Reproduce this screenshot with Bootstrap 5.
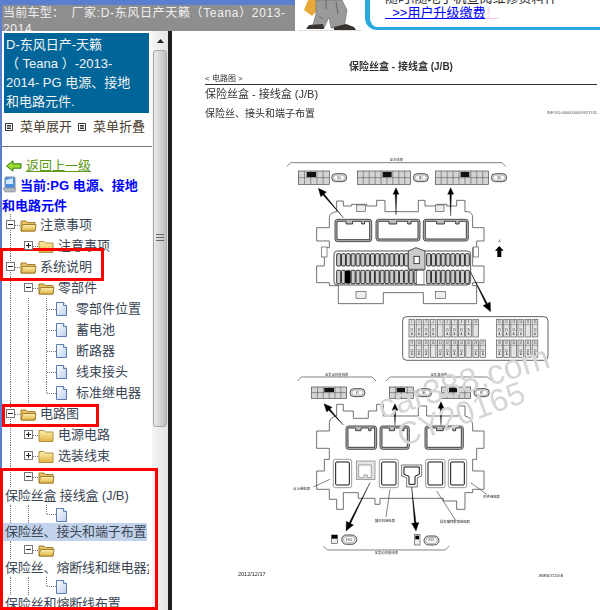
<!DOCTYPE html>
<html lang="zh-CN">
<head>
    <meta charset="UTF-8">
    <meta name="viewport" content="width=device-width, initial-scale=1.0">
    <title>保险丝盒 - 接线盒 (J/B)</title>
    <link href="https://cdn.jsdelivr.net/npm/bootstrap@5.3.0/dist/css/bootstrap.min.css" rel="stylesheet">
    <style>
        html, body { height: 100%; }
        body { font-family: "Liberation Sans", "Noto Sans CJK SC", sans-serif; font-size: 13px; background: #fff; overflow: hidden; }
        .page { width: 600px; height: 610px; position: relative; overflow: hidden; }
        .top { height: 31px; }
        .car-bar { width: 295px; height: 31px; background: #8e8e8e; color: #eee; border-top: 5px solid #5b7fd0; border-left: 2px solid #5b7fd0; padding-left: 1px; font-size: 12px; line-height: 16px; letter-spacing: .25px; }
        .car-bar span { letter-spacing: .65px; }
        .man { width: 64px; margin-left: 3px; }
        .bubble { width: 235px; height: 30px; margin-left: 3px; border: solid #29a9dd; border-width: 0 0 3px 5px; border-bottom-left-radius: 12px; padding-left: 15px; line-height: 15px; }
        .bubble .cut { margin-top: -10px; color: #222; }
        .bubble a { color: #00f; }
        .bubble i { color: #f9c9f0; font-style: normal; text-decoration: underline; }
        .main { height: 579px; }
        .side { width: 152px; border-left: 2px solid #5b7fd0; }
        .title-box { background: #069; color: #f4f4f4; margin: 2px 2px 0 2px; height: 80px; width: 145px; padding: 2px 2px 0 2px; line-height: 19px; white-space: nowrap; }
        .menu-row { height: 28px; padding-left: 3px; color: #4a4030; white-space: nowrap; }
        .menu-row svg { margin-right: 7px; flex: none; }
        .menu-row span { margin-right: 6px; }
        .side hr { margin: 5px 0 9px; border-top: 1px solid #777; opacity: 1; }
        .back { height: 20px; padding-left: 4px; }
        .back a { color: #5c9a18; margin-left: 4px; }
        .current { color: #00f; font-weight: 700; line-height: 20px; white-space: nowrap; }
        .current svg { margin-right: 3px; vertical-align: -3px; }
        .tree { color: #3a4654; white-space: nowrap; overflow: hidden; width: 147px; margin-top: -2px; line-height: 18px; }
        .row-t { height: 21px; }
        .row-s { height: 18px; }
        .g, .x, .c { width: 18px; height: 100%; flex: none; position: relative; }
        .g::before, .x::before { content: ""; position: absolute; left: 8px; top: 0; bottom: 0; border-left: 1px dotted #777; }
        .x.end::before { display: none; }
        .x::after, .c::after { content: ""; position: absolute; left: 9px; right: 0; top: 50%; border-top: 1px dotted #777; }
        .c::before { content: ""; position: absolute; left: 8px; top: 0; height: 50%; border-left: 1px dotted #777; }
        .box { position: absolute; left: 4px; top: 50%; margin-top: -5px; width: 9px; height: 9px; background: #fff; border: 1px solid #777; z-index: 1; }
        .box::before { content: ""; position: absolute; left: 1px; right: 1px; top: 3px; border-top: 1px solid #222; }
        .box.plus::after { content: ""; position: absolute; top: 1px; bottom: 1px; left: 3px; border-left: 1px solid #222; }
        .folder { width: 20px; flex: none; }
        .doc { width: 20px; flex: none; }
        .textline { padding-left: 3px; position: relative; letter-spacing: -.15px; }
        .textline::before { content: ""; position: absolute; left: 8px; top: 0; bottom: 0; border-left: 1px dotted #777; z-index: 0; }
        .textline span { position: relative; background: #fff; }
        .textline.sel { background: #c2d2ea; width: 145px; }
        .textline.sel::before { display: none; }
        .textline.sel span { background: transparent; }
        .scroll { width: 16px; background: linear-gradient(90deg, #f4f4f4, #e4e4e4); position: relative; }
        .scroll .up { height: 19px; }
        .thumb { height: 377px; margin: 0 1px; border: 1px solid #a8a8a8; border-radius: 3px; background: linear-gradient(90deg, #e9e9e9, #d4d4d4 55%, #bdbdbd); }
        .grip { width: 8px; height: 7px; border-top: 1px solid #666; border-bottom: 1px solid #666; position: relative; margin-top: 183px; }
        .grip::after { content: ""; position: absolute; left: 0; right: 0; top: 2px; border-top: 1px solid #666; }
        .divider { width: 4px; background: #1e1e1e; }
        .content { width: 428px; }
        .heads { padding: 29px 3px 0 33px; color: #333; filter: blur(.25px); }
        .heads h1 { font-size: 10px; font-weight: 700; line-height: 14px; margin: 0; text-align: center; }
        .crumb { font-size: 8px; line-height: 10px; border-bottom: 1px solid #333; height: 11px; }
        .heads h2 { font-size: 11px; font-weight: 400; line-height: 18px; margin: 0; }
        .sub { height: 20px; font-size: 10px; }
        .sub small { font-size: 4px; color: #555; }
        .diagram { display: block; filter: blur(.4px); }
        .redbox { position: absolute; border: 3px solid #f00; pointer-events: none; }
        .redbox-1 { left: 0; top: 248px; width: 104px; height: 33px; }
        .redbox-2 { left: 2px; top: 404px; width: 97px; height: 23px; }
        .redbox-3 { left: 0; top: 468px; width: 158px; height: 142px; }
    </style>
</head>
<body>
<div class="page">
    <div class="top d-flex">
        <div class="car-bar overflow-hidden">当前车型：&nbsp;&nbsp;<span>厂家:D-东风日产天籁（Teana）2013-2014</span></div>
        <svg class="man" viewBox="0 0 64 31" height="31">
            <path d="M10 0h14l-2 8-8 8-8-6z" fill="#e8a83a"/>
            <path d="M18 0h26l5 10-3 18H33l-2-11-5 11H14l4-14z" fill="#9a9a9a" stroke="#666" stroke-width=".6"/>
            <path d="M28 0v9M38 2l2 12M21 16l4 3" stroke="#666" fill="none"/>
            <path d="M8 29l3-4 14-1 1 5zM36 27l12-3 8 3 2 3H36z" fill="#3a3430"/>
            <path d="M0 31h64" stroke="#bbb"/>
        </svg>
        <div class="bubble">
            <div class="cut text-nowrap">随时,随地手机查阅维修资料件</div>
            <div class="text-nowrap"><a href="#">&nbsp;&nbsp;>>用户升级缴费</a><i>！</i></div>
        </div>
    </div>

    <div class="main d-flex">
        <div class="side flex-none overflow-hidden">
            <div class="title-box">D-东风日产-天籁<br>（ Teana ）-2013-<br>2014- PG 电源、接地<br>和电路元件.</div>
            <div class="menu-row d-flex align-items-center">
                <svg width="8" height="8" viewBox="0 0 8 8"><path d="M.5.5h7v7h-7zM2 2.500h4M2 4h4M2 5.500h4" fill="#fff" stroke="#333"/></svg>
                <span>菜单展开</span>
                <svg width="8" height="8" viewBox="0 0 8 8"><path d="M.5.5h7v7h-7zM2 2.500h4M2 4h4M2 5.500h4" fill="#fff" stroke="#333"/></svg>
                <span>菜单折叠</span>
            </div>
            <hr>
            <div class="back d-flex align-items-center">
                <svg width="16" height="12" viewBox="0 0 16 12"><path d="M.5 6L7 .8v3h8v4.400H7v3z" fill="#9bdc2e" stroke="#2f7a10"/></svg>
                <a href="#">返回上一级</a>
            </div>
            <div class="current">
                <svg width="15" height="17" viewBox="0 0 15 17"><rect x="3" y="1" width="10" height="11" rx="1" fill="#4a90e0" stroke="#7a8ea8"/><path d="M4 4l7-2v6H4z" fill="#cfe6fb"/><path d="M1 12h13l-1 4H3z" fill="#b4bac4" stroke="#7a8090" stroke-width=".6"/></svg>当前:PG 电源、接地<br>和电路元件
            </div>
            <div class="tree">
                <div class="row-t d-flex align-items-center"><span class="x"><span class="box"></span></span><svg class="folder" height="14" viewBox="0 0 20 14"><use href="#fo"/></svg>注意事项</div>
                <div class="row-t d-flex align-items-center"><span class="g"></span><span class="x end"><span class="box plus"></span></span><svg class="folder" height="14" viewBox="0 0 20 14"><use href="#fc"/></svg>注意事项</div>
                <div class="row-t d-flex align-items-center"><span class="x"><span class="box"></span></span><svg class="folder" height="14" viewBox="0 0 20 14"><use href="#fo"/></svg>系统说明</div>
                <div class="row-t d-flex align-items-center"><span class="g"></span><span class="x end"><span class="box"></span></span><svg class="folder" height="14" viewBox="0 0 20 14"><use href="#fo"/></svg>零部件</div>
                <div class="row-t d-flex align-items-center"><span class="g"></span><span class="g"></span><span class="x"></span><svg class="doc" height="15" viewBox="0 0 20 15"><use href="#dc"/></svg>零部件位置</div>
                <div class="row-t d-flex align-items-center"><span class="g"></span><span class="g"></span><span class="x"></span><svg class="doc" height="15" viewBox="0 0 20 15"><use href="#dc"/></svg>蓄电池</div>
                <div class="row-t d-flex align-items-center"><span class="g"></span><span class="g"></span><span class="x"></span><svg class="doc" height="15" viewBox="0 0 20 15"><use href="#dc"/></svg>断路器</div>
                <div class="row-t d-flex align-items-center"><span class="g"></span><span class="g"></span><span class="x"></span><svg class="doc" height="15" viewBox="0 0 20 15"><use href="#dc"/></svg>线束接头</div>
                <div class="row-t d-flex align-items-center"><span class="g"></span><span class="g"></span><span class="c"></span><svg class="doc" height="15" viewBox="0 0 20 15"><use href="#dc"/></svg>标准继电器</div>
                <div class="row-t d-flex align-items-center"><span class="x"><span class="box"></span></span><svg class="folder" height="14" viewBox="0 0 20 14"><use href="#fo"/></svg>电路图</div>
                <div class="row-t d-flex align-items-center"><span class="g"></span><span class="x end"><span class="box plus"></span></span><svg class="folder" height="14" viewBox="0 0 20 14"><use href="#fc"/></svg>电源电路</div>
                <div class="row-t d-flex align-items-center"><span class="g"></span><span class="x end"><span class="box plus"></span></span><svg class="folder" height="14" viewBox="0 0 20 14"><use href="#fc"/></svg>选装线束</div>
                <div class="row-t d-flex align-items-center"><span class="g"></span><span class="x end"><span class="box"></span></span><svg class="folder" height="14" viewBox="0 0 20 14"><use href="#fo"/></svg></div>
                <div class="row-s d-flex align-items-center textline"><span>保险丝盒 接线盒 (J/B)</span></div>
                <div class="row-s d-flex align-items-center"><span class="g"></span><span class="g"></span><span class="c"></span><svg class="doc" height="15" viewBox="0 0 20 15"><use href="#dc"/></svg></div>
                <div class="row-s d-flex align-items-center textline sel"><span>保险丝、接头和端子布置</span></div>
                <div class="row-s d-flex align-items-center"><span class="g"></span><span class="x end"><span class="box"></span></span><svg class="folder" height="14" viewBox="0 0 20 14"><use href="#fo"/></svg></div>
                <div class="row-s d-flex align-items-center textline"><span>保险丝、熔断线和继电器盒</span></div>
                <div class="row-s d-flex align-items-center"><span class="g"></span><span class="g"></span><span class="c"></span><svg class="doc" height="15" viewBox="0 0 20 15"><use href="#dc"/></svg></div>
                <div class="row-s d-flex align-items-center textline"><span>保险丝和熔断线布置</span></div>
            </div>
        </div>
        <div class="scroll flex-none">
            <div class="up d-flex justify-content-center align-items-center"><svg width="7" height="4" viewBox="0 0 7 4"><path d="M3.500 0L7 4H0z" fill="#222"/></svg></div>
            <div class="thumb d-flex justify-content-center"><div class="grip"></div></div>
        </div>
        <div class="divider flex-none"></div>
        <div class="content flex-none">
            <div class="heads">
                <h1>保险丝盒 - 接线盒 (J/B)</h1>
                <div class="crumb">&lt; 电路图 &gt;</div>
                <h2>保险丝盒 - 接线盒 (J/B)</h2>
                <div class="sub d-flex justify-content-between align-items-center"><span>保险丝、接头和端子布置</span><small>INFOID:0000000009921745</small></div>
            </div>
            <svg class="diagram" id="dia" width="428" height="488" viewBox="172 122 428 488" font-family="Liberation Sans, Noto Sans CJK SC, sans-serif"></svg>
        </div>
    </div>

    <div class="redbox redbox-1"></div>
    <div class="redbox redbox-2"></div>
    <div class="redbox redbox-3"></div>

    <svg width="0" height="0" class="position-absolute">
        <defs>
            <linearGradient id="fy" x1="0" y1="0" x2="0" y2="1"><stop offset="0" stop-color="#fdf0b0"/><stop offset="1" stop-color="#e2b445"/></linearGradient>
            <linearGradient id="db" x1="0" y1="0" x2="1" y2="1"><stop offset="0" stop-color="#fff"/><stop offset="1" stop-color="#bcd0f0"/></linearGradient>
            <g id="fc"><path d="M1 2.500h5l1.500 1.500H15v9.500H1z" fill="url(#fy)" stroke="#b09040"/></g>
            <g id="fo"><path d="M1 3h5l1.500 1.500H15v8.500H1z" fill="#e8c060" stroke="#a08030"/><path d="M1 13l1.500-6.500H16L15 13z" fill="url(#fy)" stroke="#a08030"/></g>
            <g id="dc"><path d="M.5 1.500h7l3 3v10H.5z" fill="url(#db)" stroke="#5a7ab0"/><path d="M7.500 1.500v3h3" fill="#fff" stroke="#5a7ab0"/></g>
        </defs>
    </svg>
</div>

<script src="https://cdn.jsdelivr.net/npm/bootstrap@5.3.0/dist/js/bootstrap.bundle.min.js"></script>
<script>
    // the wiring picture is all repeated cells, so build it here
    // coordinates are 3x crops: a = origin of the fuse box, b = origin of the relay box
    let a = "", b = "";
    const line = "#444";

    function conn(x, y, w, h, nx, bx, bw) {
        let s = `<rect x="${x}" y="${y}" width="${w}" height="${h}" fill="#d4d4d4" stroke="${line}" stroke-width="2"/>`;
        for (let i = 1; i < nx; i++) {
            let cx = x + i * w / nx;
            s += `<path d="M${cx} ${y}v${h}" stroke="${line}" stroke-width="1.500"/>`;
        }
        s += `<path d="M${x} ${y + h / 2}h${w}" stroke="${line}" stroke-width="1.500"/>`;
        s += `<rect x="${bx}" y="${y + 3}" width="${bw}" height="${h / 2 - 5}" fill="#111"/>`;
        return s;
    }
    function oval(x, y, w, h, t) {
        return `<rect x="${x}" y="${y}" width="${w}" height="${h}" rx="${h / 2}" fill="#ddd" stroke="#333" stroke-width="2.500"/>` +
            `<rect x="${x + 6}" y="${y + 5}" width="${w - 12}" height="${h - 10}" rx="${(h - 10) / 2}" fill="#fff" stroke="#555"/>` +
            `<text x="${x + w / 2}" y="${y + h / 2 + 3}" font-size="8" text-anchor="middle" fill="#333">${t}</text>`;
    }
    function arrow(x1, y1, x2, y2, w) {
        let dx = x2 - x1, dy = y2 - y1, len = Math.hypot(dx, dy);
        let ux = dx / len, uy = dy / len, px = -uy, py = ux, hl = w * 2.2;
        let bx = x2 - ux * hl, by = y2 - uy * hl;
        return `<path d="M${x1} ${y1}L${bx - px * 2.500} ${by - py * 2.500}L${bx - px * w} ${by - py * w}L${x2} ${y2}L${bx + px * w} ${by + py * w}L${bx + px * 2.500} ${by + py * 2.500}Z" fill="#000" stroke="#000"/>`;
    }
    function socket(x, y, w, h) {
        let n = w / 4;
        return `<rect x="${x}" y="${y}" width="${w}" height="${h}" rx="8" fill="#bbb" stroke="#333" stroke-width="2.500"/>` +
            `<path d="M${x + 6} ${y + 6}h${n}v8h${n * .7}v-8h${n}v8h${n * .3}v-8h${n - 12}v${h - 12}H${x + 6}z" fill="#fff" stroke="#222" stroke-width="2.500"/>`;
    }
    function bracket(x1, x2, y, dir, t) {
        return `<path d="M${x1} ${y + 12 * dir}L${x1 + 12} ${y}H${x2 - 12}L${x2} ${y + 12 * dir}" fill="none" stroke="#444" stroke-width="2"/>` +
            `<text x="${(x1 + x2) / 2}" y="${dir > 0 ? y - 4 : y + 13}" font-size="10" text-anchor="middle" fill="#333">${t}</text>`;
    }
    function label(x, y, t) {
        return `<text x="${x}" y="${y}" font-size="10" text-anchor="middle" fill="#222">${t}</text>`;
    }

    // fuse box, top half
    a += bracket(20, 678, 35, 1, "至主线束");
    a += conn(55, 60, 93, 40, 5, 80, 28) + oval(155, 68, 45, 24, "M1");
    a += conn(232, 60, 160, 40, 9, 308, 27) + oval(400, 68, 45, 24, "M2");
    a += conn(466, 60, 160, 40, 9, 542, 26) + oval(634, 68, 46, 24, "M3");
    a += `<path fill="#fff" stroke="#555" stroke-width="2.500" d="M170 182V150H190V165H215V160H260V165H290V148H315V182H415V148H435V165H470V160H500V165H530V148H555V182H565Q578 185 578 200V230H612V270H590V290H578V345H612V395H578V404H590V458H430V425H310V458H175V404H148V395H110V345H133V290H148V270H110V230H148V200Q148 185 170 182Z"/>`;
    a += `<rect x="125" y="288" width="16" height="30" fill="#fff" stroke="#555" stroke-width="2"/><rect x="580" y="288" width="16" height="30" fill="#fff" stroke="#555" stroke-width="2"/>`;
    a += `<rect x="230" y="162" width="26" height="20" fill="#eee" stroke="#555" stroke-width="2"/><rect x="466" y="162" width="26" height="20" fill="#eee" stroke="#555" stroke-width="2"/>`;
    a += `<rect x="228" y="422" width="30" height="20" fill="#eee" stroke="#555" stroke-width="2"/><rect x="466" y="422" width="30" height="20" fill="#eee" stroke="#555" stroke-width="2"/>`;
    a += socket(165, 205, 110, 67) + socket(288, 205, 132, 65) + socket(430, 205, 135, 65);
    a += `<rect x="162" y="300" width="410" height="102" rx="10" fill="#fff" stroke="#333" stroke-width="2.500"/>`;
    const fuseRow = (x0, x1, y, h) => {
        let s = "";
        for (let x = x0; x < x1; x += 14.500) {
            s += `<rect x="${x}" y="${y}" width="12" height="${h}" rx="3" fill="#ccc" stroke="#111" stroke-width="2.500"/>`;
        }
        return s;
    };
    a += fuseRow(170, 380, 308, 37) + fuseRow(440, 568, 308, 37);
    a += fuseRow(170, 405, 358, 40) + fuseRow(440, 568, 358, 40);
    a += `<rect x="194" y="360" width="16" height="36" fill="#000"/>`;
    a += `<rect x="410" y="358" width="22" height="42" fill="#fff" stroke="#555" stroke-width="2"/>`;
    a += `<path d="M385 300L408 290L435 300V355H385Z" fill="#ccc" stroke="#333" stroke-width="2.500"/><rect x="402" y="316" width="16" height="22" fill="#fff" stroke="#222" stroke-width="2.500"/>`;
    a += arrow(190, 200, 115, 112, 11) + arrow(348, 192, 348, 110, 9) + arrow(512, 195, 512, 110, 9) + arrow(570, 360, 632, 482, 12);
    a += `<path d="M658 285L671 299H664V318H652V299H645Z" fill="#000"/>` + label(658, 272, "上");

    // fuse panel
    a += `<rect x="368" y="497" width="436" height="131" rx="12" fill="#fff" stroke="#444" stroke-width="2.500"/>`;
    let num = 1;
    const cellRow = (x0, count, y, h) => {
        let s = "";
        for (let i = 0; i < count; i++, num++) {
            let x = x0 + i * 21.300;
            s += `<rect x="${x}" y="${y}" width="17" height="${h}" fill="#e4e4e4" stroke="#555" stroke-width="2"/>`;
            s += `<path d="M${x} ${y + 16}h17" stroke="#555" stroke-width="1.500"/>`;
            s += `<text x="${x + 8.500}" y="${y + 12}" font-size="8" text-anchor="middle" fill="#333">${num}</text>`;
            if (num % 5 !== 0) s += `<text x="${x + 8.500}" y="${y + 36}" font-size="8" text-anchor="middle" fill="#333">15</text><text x="${x + 8.500}" y="${y + 46}" font-size="8" text-anchor="middle" fill="#333">A</text>`;
        }
        return s;
    };
    a += cellRow(387, 10, 505, 53) + cellRow(650, 6, 505, 53) + cellRow(387, 11, 567, 53) + cellRow(650, 6, 567, 53);

    // relay box
    b += bracket(52, 288, 48, 1, "至发动机舱线束") + bracket(318, 635, 48, 1, "至车身线束");
    b += conn(95, 78, 105, 34, 6, 133, 29) + oval(210, 83, 45, 24, "E1");
    b += conn(328, 78, 72, 34, 4, 350, 25) + oval(410, 83, 45, 24, "B6");
    b += conn(485, 78, 87, 34, 5, 507, 25) + oval(582, 83, 46, 24, "B7");
    b += `<path fill="#fff" stroke="#555" stroke-width="2.500" d="M170 165V130H190V150H220V172H265V150H290V130H310V165H415V135H440V165H535V135H555V165Q578 170 578 195V210H612V262H590V295H578V330H612V385H578V395H555V445H530V420H490V412H300V430H285V412H235V395H190V445H170V415H148V385H110V330H133V295H148V262H110V210H148V185Q150 168 170 165Z"/>`;
    b += socket(198, 195, 92, 70) + socket(300, 195, 88, 70) + socket(435, 195, 115, 70);
    const relay = (x, y, w, h, col, sw) => `<rect x="${x}" y="${y}" width="${w}" height="${h}" rx="6" fill="#fff" stroke="#666" stroke-width="2"/><rect x="${x + 7}" y="${y + 8}" width="${w - 14}" height="${h - 16}" rx="3" fill="#fff" stroke="${col}" stroke-width="${sw}"/>`;
    b += relay(160, 295, 55, 85, "#111", 3) + relay(298, 295, 57, 85, "#111", 3) + relay(437, 295, 58, 85, "#111", 3) + relay(505, 295, 55, 85, "#111", 3);
    b += `<rect x="230" y="300" width="55" height="55" fill="#e4e4e4" stroke="#777" stroke-width="2"/><path d="M236 350V312H274V350H262V342H252V350Z" fill="#fff" stroke="#777" stroke-width="2"/>`;
    b += `<path d="M365 312H425V345L412 350V378H380V350L365 345Z" fill="#fff" stroke="#333" stroke-width="2"/><path d="M372 318H418V340L405 346V370H387V346L372 340Z" fill="#fff" stroke="#111" stroke-width="3"/>`;
    b += `<path d="M150 355L100 378M330 385L318 468M470 390L525 475M572 365L620 400" stroke="#444" stroke-width="2" fill="none"/>`;
    b += label(65, 388, "点火继电器") + label(315, 483, "鼓风机继电器") + label(525, 487, "挡车窗除雾器继电器") + label(635, 412, "附件继电器");
    b += arrow(190, 192, 132, 128, 11) + arrow(345, 192, 345, 128, 9) + arrow(483, 192, 483, 122, 9) + arrow(270, 365, 198, 510, 12) + arrow(395, 378, 408, 510, 11);
    b += `<rect x="155" y="522" width="17" height="26" fill="#eee" stroke="#555" stroke-width="2"/><rect x="155" y="522" width="17" height="11" fill="#000"/>`;
    b += `<rect x="403" y="520" width="17" height="32" fill="#eee" stroke="#555" stroke-width="2"/><rect x="406" y="524" width="11" height="11" fill="#000"/>`;
    b += oval(185, 522, 45, 28, "E100") + oval(432, 525, 45, 27, "E101");
    b += bracket(130, 508, 567, -1, "至发动机舱线束");
    b += `<text x="812" y="648" font-size="10" text-anchor="middle" fill="#222">JRMWD7125GB</text>`;

    document.getElementById("dia").innerHTML =
        `<g transform="translate(280 150) scale(.3333)">${a}</g>` +
        `<g transform="translate(280 360) scale(.3333)">${b}</g>` +
        `<text x="238" y="575" font-size="5.500" fill="#222">2012/12/17</text>` +
        `<g fill="#d6d6d6"><text transform="translate(382 418) rotate(-17)" font-size="34">car388.com</text><text transform="translate(402 446) rotate(-20)" font-size="32">CY20165</text></g>`;
</script>
</body>
</html>
